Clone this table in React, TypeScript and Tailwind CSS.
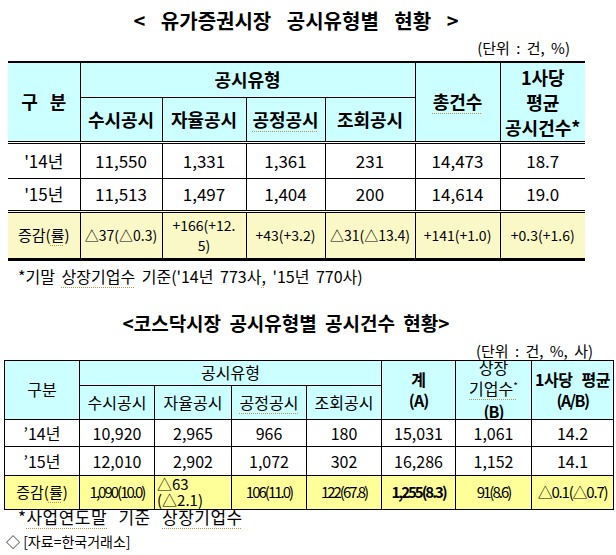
import React from "react";

const UL =
  "underline decoration-dotted decoration-[#b8964a] decoration-1 underline-offset-[4px]";

export default function App() {
  return (
    <div className="w-[616px] h-[555px] overflow-hidden bg-white text-black font-['Noto_Sans_CJK_KR','Noto_Sans',sans-serif]">
      {/* Title 1 */}
      <div className="h-[34px] pt-[8px] pr-[24px] text-center text-[20px] leading-[26px] font-bold [word-spacing:11px]">
        &lt; 유가증권시장 공시유형별 현황 &gt;
      </div>
      <div className="h-[27px] pt-[4px] pr-[46px] text-right text-[15px] leading-[20px] [word-spacing:3px]">
        (단위 : 건, %)
      </div>

      {/* Table 1 */}
      <table className="ml-[8px] w-[577px] table-fixed border-collapse border-t-2 border-b-[3px] border-black text-center">
        <colgroup>
          <col className="w-[72px]" />
          <col className="w-[82px]" />
          <col className="w-[84px]" />
          <col className="w-[79px]" />
          <col className="w-[90px]" />
          <col className="w-[85px]" />
          <col className="w-[85px]" />
        </colgroup>
        <tbody>
          <tr className="h-[35px] bg-[#ccffff] text-[18px] leading-[25px] font-bold">
            <td rowSpan={2} className="border-r border-black [word-spacing:8px]">
              구 분
            </td>
            <td colSpan={4} className="border-r border-black">
              공시유형
            </td>
            <td rowSpan={2} className="border-r border-black">
              <span className={UL}>총건수</span>
            </td>
            <td rowSpan={2} className="pt-[2px]">
              1사당
              <br />
              평균
              <br />
              공시건수*
            </td>
          </tr>
          <tr className="h-[45px] bg-[#ccffff] text-[18px] leading-[25px] font-bold">
            <td className="border-t border-r border-black">수시공시</td>
            <td className="border-t border-r border-black">자율공시</td>
            <td className="border-t border-r border-black">
              <span className={UL}>공정공시</span>
            </td>
            <td className="border-t border-r border-black">조회공시</td>
          </tr>
          <tr className="h-[36px] text-[17px] leading-[22px]">
            <td className="border-t-[3px] border-double border-r border-black">'14년</td>
            <td className="border-t-[3px] border-double border-r border-black">11,550</td>
            <td className="border-t-[3px] border-double border-r border-black">1,331</td>
            <td className="border-t-[3px] border-double border-r border-black">1,361</td>
            <td className="border-t-[3px] border-double border-r border-black">231</td>
            <td className="border-t-[3px] border-double border-r border-black">14,473</td>
            <td className="border-t-[3px] border-double border-black">18.7</td>
          </tr>
          <tr className="h-[33px] text-[17px] leading-[22px]">
            <td className="border-t border-r border-black">'15년</td>
            <td className="border-t border-r border-black">11,513</td>
            <td className="border-t border-r border-black">1,497</td>
            <td className="border-t border-r border-black">1,404</td>
            <td className="border-t border-r border-black">200</td>
            <td className="border-t border-r border-black">14,614</td>
            <td className="border-t border-black">19.0</td>
          </tr>
          <tr className="h-[48px] bg-[#fbf8c8] text-[14px] leading-[20px]">
            <td className="border-t-[3px] border-double border-r border-black text-[15px]">
              증감(<span className={UL}>률</span>)
            </td>
            <td className="border-t-[3px] border-double border-r border-black">△37(△0.3)</td>
            <td className="border-t-[3px] border-double border-r border-black">
              +166(+12.
              <br />
              5)
            </td>
            <td className="border-t-[3px] border-double border-r border-black">+43(+3.2)</td>
            <td className="border-t-[3px] border-double border-r border-black">△31(△13.4)</td>
            <td className="border-t-[3px] border-double border-r border-black">+141(+1.0)</td>
            <td className="border-t-[3px] border-double border-black">+0.3(+1.6)</td>
          </tr>
        </tbody>
      </table>

      <div className="mt-[5px] pl-[18px] text-[16px] leading-[20px] [word-spacing:3px]">
        *기말 <span className={UL}>상장기업수</span> 기준('14년 773사
        <span className={UL}>,</span> '15년 770사)
      </div>

      {/* Title 2 */}
      <div className="mt-[25px] h-[24px] pr-[44px] text-center text-[19px] leading-[24px] font-bold [word-spacing:4px]">
        &lt;코스닥시장 공시유형별 공시건수 현황&gt;
      </div>
      <div className="mt-[8px] h-[16px] pr-[23px] text-right text-[15px] leading-[16px] [word-spacing:3px]">
        (단위 : 건, %, 사)
      </div>

      {/* Table 2 */}
      <table className="mt-[1px] ml-[4px] w-[609px] table-fixed border-collapse border border-black text-center">
        <colgroup>
          <col className="w-[75px]" />
          <col className="w-[75px]" />
          <col className="w-[77px]" />
          <col className="w-[75px]" />
          <col className="w-[75px]" />
          <col className="w-[74px]" />
          <col className="w-[76px]" />
          <col className="w-[82px]" />
        </colgroup>
        <tbody>
          <tr className="h-[25px] bg-[#ccffff] text-[16px] leading-[21px]">
            <td rowSpan={2} className="border border-black">
              구분
            </td>
            <td colSpan={4} className="border border-black">
              공시유형
            </td>
            <td rowSpan={2} className="border border-black font-bold">
              계
              <br />
              <span className="tracking-[-1px]">(A)</span>
            </td>
            <td rowSpan={2} className="border border-black p-0">
              <div className="flex h-[58px] flex-col justify-center overflow-hidden leading-[21px]">
                <div>상장</div>
                <div>
                  <span className={UL}>
                    기업수<sup className="text-[10px]">*</sup>
                  </span>
                </div>
                <div className="font-bold tracking-[-1px] mt-[2px]">(B)</div>
              </div>
            </td>
            <td rowSpan={2} className="border border-black font-bold">
              <span className="[word-spacing:6px] tracking-[-0.5px]">1사당 평균</span>
              <br />
              <span className="tracking-[-1.5px]">(A/B)</span>
            </td>
          </tr>
          <tr className="h-[34px] bg-[#ccffff] text-[16px] leading-[21px]">
            <td className="border border-black">수시공시</td>
            <td className="border border-black">자율공시</td>
            <td className="border border-black">
              <span className={UL}>공정공시</span>
            </td>
            <td className="border border-black">조회공시</td>
          </tr>
          <tr className="h-[27px] text-[16px] leading-[22px]">
            <td className="border border-black">’14년</td>
            <td className="border border-black">10,920</td>
            <td className="border border-black">2,965</td>
            <td className="border border-black">966</td>
            <td className="border border-black">180</td>
            <td className="border border-black">15,031</td>
            <td className="border border-black">1,061</td>
            <td className="border border-black">14.2</td>
          </tr>
          <tr className="h-[29px] text-[16px] leading-[22px]">
            <td className="border border-black">’15년</td>
            <td className="border border-black">12,010</td>
            <td className="border border-black">2,902</td>
            <td className="border border-black">1,072</td>
            <td className="border border-black">302</td>
            <td className="border border-black">16,286</td>
            <td className="border border-black">1,152</td>
            <td className="border border-black">14.1</td>
          </tr>
          <tr className="h-[34px] bg-[#ffff99] text-[15px] leading-[18px]">
            <td className="border border-black">
              증감(<span className={UL}>률</span>)
            </td>
            <td className="border border-black tracking-[-2px]">1,090(10.0)</td>
            <td className="border border-black pl-[2px] text-left leading-[16px]">
              △63
              <br />
              (△2.1)
            </td>
            <td className="border border-black tracking-[-2px]">106(11.0)</td>
            <td className="border border-black tracking-[-2px]">122(67.8)</td>
            <td className="border border-black font-bold tracking-[-2px]">1,255(8.3)</td>
            <td className="border border-black tracking-[-2px]">91(8.6)</td>
            <td className="border border-black tracking-[-1.2px]">△0.1(△0.7)</td>
          </tr>
        </tbody>
      </table>

      <div className="mt-[-2px] h-[18px] pl-[18px] text-[17px] leading-[18px] tracking-[0.5px] [word-spacing:7px]">
        *<span className={UL}>사업연도말</span> 기준 <span className={UL}>상장기업수</span>
      </div>
      <div className="mt-[5px] pl-[6px] text-[14px] leading-[20px]">◇ [자료=한국거래소]</div>
    </div>
  );
}
